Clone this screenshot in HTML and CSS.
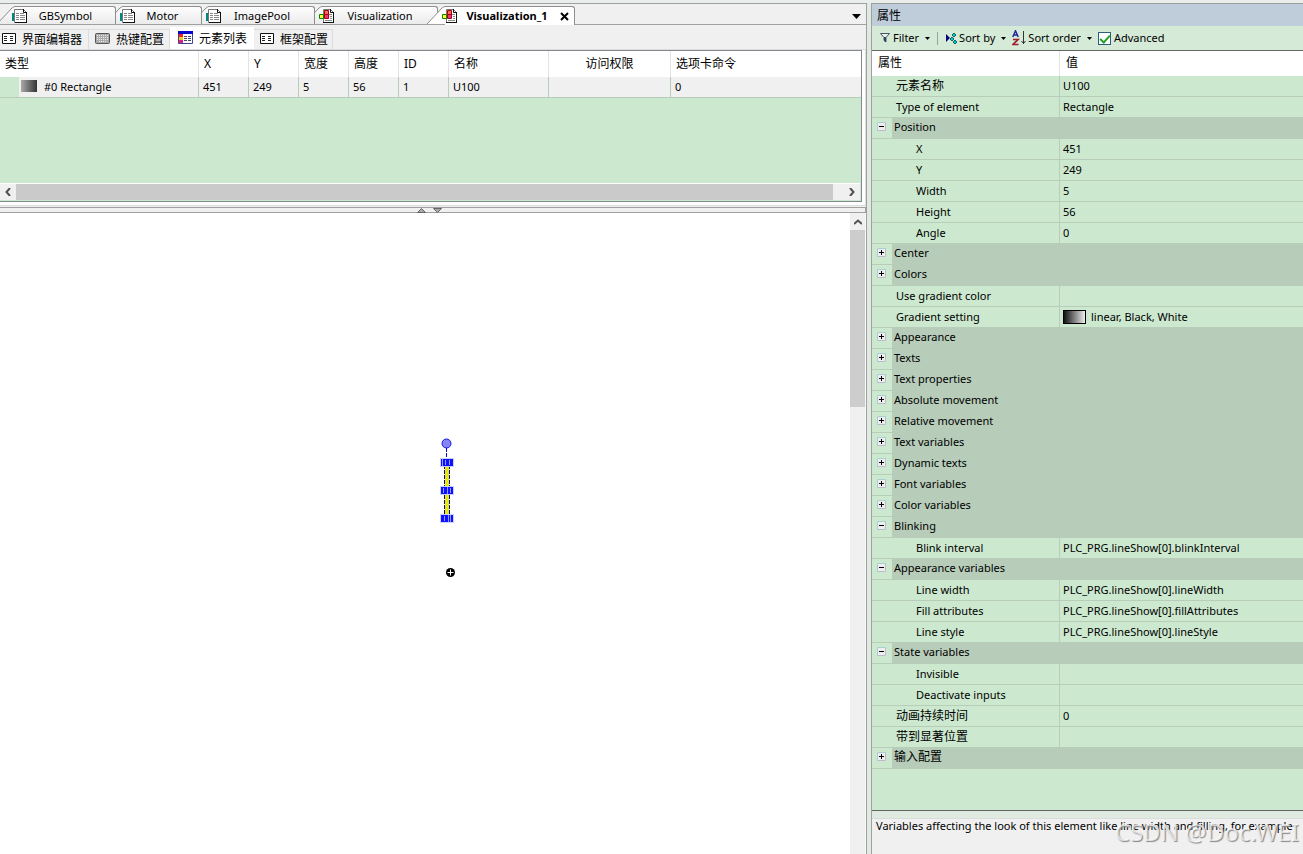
FILE: index.html
```html
<!DOCTYPE html>
<html lang="zh-CN">
<head>
<meta charset="utf-8">
<title>Visualization_1</title>
<link rel="stylesheet" href="styles.css">
</head>
<body>
<svg class="defs" width="0" height="0" aria-hidden="true">
  <defs>
    <linearGradient id="tabfill" x1="0" y1="0" x2="0" y2="1"><stop offset="0" stop-color="#fdfdfd"/><stop offset="1" stop-color="#ebebeb"/></linearGradient>
    <symbol id="slant" viewBox="0 0 18 18"><path d="M0 18L15 2Q17 .5 18 .5V18z" fill="url(#tabfill)"/><path d="M0 18L15 2Q17 .5 18 .5" fill="none" stroke="#8e8e8e"/></symbol>
    <symbol id="slant-on" viewBox="0 0 18 18"><path d="M0 18L15 2Q17 .5 18 .5V18z" fill="#fff"/><path d="M0 18L15 2Q17 .5 18 .5" fill="none" stroke="#8e8e8e"/></symbol>
    <symbol id="doc" viewBox="0 0 16 16"><path d="M0 5h3v8H0z" fill="#008484"/><path d="M2.500 1.500h9l3 3v10h-12z" fill="#fff" stroke="#777"/><path d="M11.500 1v3.500h3.500M14.500 4v11M3 14.500h12" fill="none" stroke="#111"/><path d="M4 5h3M8 5h4M4 7h3M8 7h5M4 9h3M8 9h5M4 11h3M8 11h5" stroke="#888" transform="translate(0 .5)"/></symbol>
    <symbol id="vis" viewBox="0 0 16 16"><path d="M4.500 1.500h7l3 3v10h-10z" fill="#fff" stroke="#777"/><path d="M11.500 1v3.500h3.500M14.500 4v11M4 14.500h11" fill="none" stroke="#111"/><path d="M10 6.500h3M11 8.500h2M11 10.500h2M6 12.500h7" stroke="#888"/><path d="M5.500 2.500h4v4h-4z" fill="#f66" stroke="#a00"/><path d="M.5 6.500h4v4h-4z" fill="#ff3" stroke="#080"/><path d="M5.500 6.500h4v4h-4z" fill="#f0308a" stroke="#a00"/></symbol>
    <symbol id="list" viewBox="0 0 14 11"><path d="M.5.5h13v10H.5z" fill="#fff" stroke="#111"/><path d="M2 3.500h4M8 3.500h4M2 5.500h4M8 5.500h4M2 7.500h4M8 7.500h4" stroke="#222" stroke-dasharray="3 1"/></symbol>
    <symbol id="keys" viewBox="0 0 15 11"><rect x=".5" y=".5" width="14" height="10" rx="1" fill="#aaa" stroke="#555"/><path d="M2 2.500h11M2 4.500h11M2 6.500h11M4 8.500h7" stroke="#eee" stroke-dasharray="1 1"/></symbol>
    <symbol id="elements" viewBox="0 0 15 13"><path d="M.5.5h14v12H.5z" fill="#fff" stroke="#448"/><path d="M0 0h15v3H0z" fill="#0808c8"/><path d="M1 3h4v3H1z" fill="#e22"/><path d="M1 6h4v3H1z" fill="#ec2"/><path d="M1 9h4v3H1z" fill="#e0208a"/><path d="M6 5.500h3M10 5.500h3M6 7.500h3M10 7.500h3M6 9.500h3M10 9.500h3" stroke="#446"/></symbol>
    <symbol id="plus" viewBox="0 0 9 9"><path d="M0 0h9v9H0z" fill="#eee"/><path d="M.5 9V.5H9" fill="none" stroke="#a7cfd4"/><path d="M8.500 1v7.500H1" fill="none" stroke="#bbc"/><path d="M2 4.500h5M4.500 2v5" stroke="#000"/></symbol>
    <symbol id="minus" viewBox="0 0 9 9"><path d="M0 0h9v9H0z" fill="#eee"/><path d="M.5 9V.5H9" fill="none" stroke="#a7cfd4"/><path d="M8.500 1v7.500H1" fill="none" stroke="#bbc"/><path d="M2 4.500h5" stroke="#000"/></symbol>
    <symbol id="caret" viewBox="0 0 5 3"><path d="M0 0h5L2.500 3z" fill="#000"/></symbol>
  </defs>
</svg>
<div class="app">
  <main class="editor">
    <nav class="tabs" aria-label="Documents">
      <button class="tab t1"><svg class="slant"><use href="#slant"/></svg><span class="body"><svg class="i16"><use href="#doc"/></svg><span class="cap">GBSymbol</span></span></button>
      <button class="tab t2"><svg class="slant"><use href="#slant"/></svg><span class="body"><svg class="i16"><use href="#doc"/></svg><span class="cap">Motor</span></span></button>
      <button class="tab t3"><svg class="slant"><use href="#slant"/></svg><span class="body"><svg class="i16"><use href="#doc"/></svg><span class="cap">ImagePool</span></span></button>
      <button class="tab t4"><svg class="slant"><use href="#slant"/></svg><span class="body"><svg class="i16"><use href="#vis"/></svg><span class="cap">Visualization</span></span></button>
      <button class="tab t5 on"><svg class="slant"><use href="#slant-on"/></svg><span class="body"><svg class="i16"><use href="#vis"/></svg><span class="cap">Visualization_1</span><svg class="close" viewBox="0 0 9 9"><path d="M1 1l7 7M8 1L1 8" stroke="#000" stroke-width="2"/></svg></span></button>
      <button class="tablist" aria-label="Tab list"><svg width="9" height="5"><path d="M0 0h9L4.500 5z"/></svg></button>
    </nav>
    <nav class="views" aria-label="Views">
      <button class="view v1"><svg width="14" height="11"><use href="#list"/></svg>界面编辑器</button>
      <button class="view v2"><svg width="15" height="11"><use href="#keys"/></svg>热键配置</button>
      <button class="view v3 sel"><svg width="15" height="13"><use href="#elements"/></svg>元素列表</button>
      <button class="view v4"><svg width="14" height="11"><use href="#list"/></svg>框架配置</button>
    </nav>
    <section class="listwrap">
      <div class="list">
        <table class="elements">
          <colgroup><col class="w200"><col class="w50"><col class="w50"><col class="w50"><col class="w50"><col class="w50"><col class="w100"><col class="w122"><col></colgroup>
          <thead><tr><th>类型</th><th>X</th><th>Y</th><th>宽度</th><th>高度</th><th>ID</th><th>名称</th><th class="mid">访问权限</th><th>选项卡命令</th></tr></thead>
          <tbody><tr><td class="kind"><div class="kindcell"><span class="swatch"></span>#0 Rectangle</div></td><td>451</td><td>249</td><td>5</td><td>56</td><td>1</td><td>U100</td><td></td><td>0</td></tr></tbody>
        </table>
        <div class="hscroll">
          <button aria-label="Scroll left"><svg width="6" height="8"><path d="M5 0L1.500 4 5 8"/></svg></button>
          <div class="hthumb"></div>
          <button aria-label="Scroll right"><svg width="6" height="8"><path d="M1 0l3.500 4L1 8"/></svg></button>
        </div>
      </div>
    </section>
    <div class="splitter">
      <svg width="26" height="5"><path d="M.5 4.500h8L4.500.5z" fill="#aaa" stroke="#666"/><path d="M16.500.5h8l-4 4z" fill="#aaa" stroke="#666"/></svg>
    </div>
    <section class="work">
      <div class="canvas">
        <svg class="shape" width="20" height="140" viewBox="0 0 20 140" role="img" aria-label="Rectangle U100">
          <path d="M9 26h4v56H9z" fill="#eaea00"/>
          <path d="M10.500 10v14M8.500 27v52M13.500 27v52" stroke="#00c" stroke-dasharray="4 1" fill="none"/>
          <circle cx="10.500" cy="5.500" r="4.500" fill="#8585f5" stroke="#1414e6"/>
          <path d="M4 20h14v9H4zM4 48h14v9H4zM4 76h14v9H4z" fill="#c8d2ff"/>
          <path d="M5 21h12v7H5zM5 49h12v7H5zM5 77h12v7H5z" fill="#1010ff"/>
          <path d="M6.500 21v7M9.500 22v5M13.500 22v5M7.500 50v5M11.500 49v7M14.500 50v5M12.500 77v7M14.500 77v7M8.500 78v5" stroke="#8c9cff"/>
          <circle cx="14.500" cy="134.500" r="4.500"/><path d="M11.500 134.500h6M14.500 131.500v6" stroke="#fff"/>
        </svg>
      </div>
      <div class="vscroll">
        <button aria-label="Scroll up"><svg width="8" height="6"><path d="M0 5l4-3.500L8 5"/></svg></button>
        <div class="vthumb"></div>
      </div>
    </section>
  </main>

  <aside class="props">
    <h1>属性</h1>
    <div class="tools">
      <button class="tool filter"><svg width="11" height="10"><path d="M.5.5h9L6 4.500V9L4 7.500v-3z" fill="#eee" stroke="#456"/><path d="M4 4h2v5L4 7.500z" fill="#345"/></svg>Filter<svg class="caret"><use href="#caret"/></svg></button>
      <span class="sep"></span>
      <button class="tool sortby"><svg width="12" height="13"><path d="M1 2v8l4-4z" fill="#00007a"/><path d="M9 1l2 2-2 2-2-2zM7 5l2 2-2 2-2-2zM10 8l2 2-2 2-2-2z" fill="#0cc" stroke="#044" stroke-width=".8"/></svg>Sort by<svg class="caret"><use href="#caret"/></svg></button>
      <button class="tool order"><svg width="14" height="16"><path d="M.8 7L3.500.8 6.200 7M2 5h3" fill="none" stroke="#2525a0" stroke-width="1.500"/><path d="M1 9.500h5l-5 5h5.500" fill="none" stroke="#a02030" stroke-width="1.700"/><path d="M11.500 1v13M9.500 11l2 2.500 2-2.500" fill="none" stroke="#333"/></svg>Sort order<svg class="caret"><use href="#caret"/></svg></button>
      <label class="adv"><input type="checkbox" checked>Advanced</label>
    </div>
    <div class="grid">
      <table class="proptable">
        <colgroup><col class="cname"><col></colgroup>
        <thead><tr><th>属性</th><th>值</th></tr></thead>
        <tbody>
          <tr><td class="zh">元素名称</td><td>U100</td></tr>
          <tr><td>Type of element</td><td>Rectangle</td></tr>
          <tr class="group"><th colspan="2"><div><button aria-label="Collapse"><svg><use href="#minus"/></svg></button><span>Position</span></div></th></tr>
          <tr class="child"><td>X</td><td>451</td></tr>
          <tr class="child"><td>Y</td><td>249</td></tr>
          <tr class="child"><td>Width</td><td>5</td></tr>
          <tr class="child"><td>Height</td><td>56</td></tr>
          <tr class="child"><td>Angle</td><td>0</td></tr>
          <tr class="group"><th colspan="2"><div><button aria-label="Expand"><svg><use href="#plus"/></svg></button><span>Center</span></div></th></tr>
          <tr class="group"><th colspan="2"><div><button aria-label="Expand"><svg><use href="#plus"/></svg></button><span>Colors</span></div></th></tr>
          <tr><td>Use gradient color</td><td></td></tr>
          <tr><td>Gradient setting</td><td><div class="gradval"><span class="grad"></span>linear, Black, White</div></td></tr>
          <tr class="group"><th colspan="2"><div><button aria-label="Expand"><svg><use href="#plus"/></svg></button><span>Appearance</span></div></th></tr>
          <tr class="group"><th colspan="2"><div><button aria-label="Expand"><svg><use href="#plus"/></svg></button><span>Texts</span></div></th></tr>
          <tr class="group"><th colspan="2"><div><button aria-label="Expand"><svg><use href="#plus"/></svg></button><span>Text properties</span></div></th></tr>
          <tr class="group"><th colspan="2"><div><button aria-label="Expand"><svg><use href="#plus"/></svg></button><span>Absolute movement</span></div></th></tr>
          <tr class="group"><th colspan="2"><div><button aria-label="Expand"><svg><use href="#plus"/></svg></button><span>Relative movement</span></div></th></tr>
          <tr class="group"><th colspan="2"><div><button aria-label="Expand"><svg><use href="#plus"/></svg></button><span>Text variables</span></div></th></tr>
          <tr class="group"><th colspan="2"><div><button aria-label="Expand"><svg><use href="#plus"/></svg></button><span>Dynamic texts</span></div></th></tr>
          <tr class="group"><th colspan="2"><div><button aria-label="Expand"><svg><use href="#plus"/></svg></button><span>Font variables</span></div></th></tr>
          <tr class="group"><th colspan="2"><div><button aria-label="Expand"><svg><use href="#plus"/></svg></button><span>Color variables</span></div></th></tr>
          <tr class="group"><th colspan="2"><div><button aria-label="Collapse"><svg><use href="#minus"/></svg></button><span>Blinking</span></div></th></tr>
          <tr class="child"><td>Blink interval</td><td>PLC_PRG.lineShow[0].blinkInterval</td></tr>
          <tr class="group"><th colspan="2"><div><button aria-label="Collapse"><svg><use href="#minus"/></svg></button><span>Appearance variables</span></div></th></tr>
          <tr class="child"><td>Line width</td><td>PLC_PRG.lineShow[0].lineWidth</td></tr>
          <tr class="child"><td>Fill attributes</td><td>PLC_PRG.lineShow[0].fillAttributes</td></tr>
          <tr class="child"><td>Line style</td><td>PLC_PRG.lineShow[0].lineStyle</td></tr>
          <tr class="group"><th colspan="2"><div><button aria-label="Collapse"><svg><use href="#minus"/></svg></button><span>State variables</span></div></th></tr>
          <tr class="child"><td>Invisible</td><td></td></tr>
          <tr class="child"><td>Deactivate inputs</td><td></td></tr>
          <tr><td class="zh">动画持续时间</td><td>0</td></tr>
          <tr><td class="zh">带到显著位置</td><td></td></tr>
          <tr class="group"><th colspan="2"><div><button aria-label="Expand"><svg><use href="#plus"/></svg></button><span class="zh">输入配置</span></div></th></tr>
        </tbody>
      </table>
    </div>
    <p class="hint">Variables affecting the look of this element like line width and filling, for example</p>
    <div class="mark">CSDN @Doc.WEI</div>
  </aside>
</div>
</body>
</html>
```
FILE: styles.css
```css
* { box-sizing: border-box; }
body {
  margin: 0;
  background: #e9eeea;
  color: #000;
  font: 11px/14px "Noto Sans", "Noto Sans CJK SC", sans-serif;
}
button { border: 0; padding: 0; margin: 0; background: none; font: inherit; color: inherit; }
svg { display: block; flex: none; }
.defs { position: absolute; }

.app {
  display: grid;
  grid-template-columns: minmax(0, 1fr) 432px;
  column-gap: 4px;
  min-height: 100vh;
  padding-top: 3px;
  background: linear-gradient(#e9eeea 3px, #dfeae0 3px);
}
.editor {
  display: flex;
  flex-direction: column;
  min-width: 0;
  background: #f0f0f0;
  border-top: 1px solid #a0a0a0;
  border-right: 1px solid #a0a0a0;
}

.tabs {
  display: flex;
  align-items: flex-end;
  height: 21px;
  padding-top: 2px;
  border-bottom: 1px solid #a0a0a0;
}
.tab { display: flex; position: relative; height: 18px; margin-left: -11px; }
.slant { width: 18px; height: 18px; }
.body {
  display: flex;
  flex: 1;
  align-items: center;
  height: 18px;
  border-top: 1px solid #8e8e8e;
  border-right: 1px solid #8e8e8e;
  border-top-right-radius: 3px;
  background: linear-gradient(#fdfdfd, #ebebeb);
}
.i16 { width: 16px; height: 16px; margin-left: -3px; }
.cap { flex: 1; padding: 0 14px 0 2px; text-align: center; }
.t1 { width: 119px; margin-left: -3px; z-index: 4; }
.t2 { width: 97px; z-index: 3; }
.t3 { width: 124px; z-index: 2; }
.t4 { width: 134px; z-index: 1; }
.t5 { width: 148px; z-index: 5; }
.on { height: 19px; margin-bottom: -1px; font-weight: bold; }
.on .body { height: 19px; background: #fff; }
.on .cap { padding: 0 4px 0 0; }
.close { width: 9px; height: 9px; margin-right: 5px; }
.tablist { align-self: center; margin: 2px 5px 0 auto; }

.views { display: flex; align-items: flex-end; height: 25px; border-bottom: 1px solid #dcdcdc; }
.view {
  display: flex;
  align-items: center;
  gap: 6px;
  height: 20px;
  border: 1px solid #dcdcdc;
  border-width: 1px 1px 0 0;
  font-size: 12px;
  line-height: 16px;
}
.view svg { margin-bottom: 3px; }
.v1 { width: 89px; padding-left: 2px; }
.v2 { width: 81px; padding-left: 6px; }
.v3 { width: 84px; padding-left: 8px; }
.v4 { width: 79px; padding-left: 6px; }
.sel { height: 22px; background: #fff; border-color: #fff; }

.listwrap { padding: 0 3px 3px 0; background: #fff; border-right: 1px solid #dcdcdc; border-bottom: 1px solid #dcdcdc; }
.list {
  display: flex;
  flex-direction: column;
  height: 152px;
  border: 1px solid #828790;
  border-left: 0;
  background: #cce8cf;
}
table { width: 100%; table-layout: fixed; border-collapse: separate; border-spacing: 0; }
th { font-weight: normal; text-align: left; }
td, th { white-space: nowrap; overflow: hidden; }
.w200 { width: 199px; }
.w50 { width: 50px; }
.w100 { width: 100px; }
.w122 { width: 122px; }
.elements th { height: 26px; padding: 0 0 0 5px; background: #fff; border-right: 1px solid #e4e4e4; font-size: 12px; line-height: 16px; }
.elements .mid { text-align: center; padding: 0; }
.elements td { height: 21px; padding: 0 0 0 4px; background: #f0f0f0; border-right: 1px solid #b7ccb9; border-bottom: 1px solid #b7ccb9; }
.elements th:last-child, .elements td:last-child { border-right: 0; }
.elements .kind { padding: 0; background: linear-gradient(90deg, #cce8cf 19px, #f0f0f0 19px); }
.kindcell { display: flex; gap: 7px; padding-left: 21px; }
.swatch { width: 16px; height: 12px; background: linear-gradient(90deg, #aaa, #333); }
.hscroll { display: flex; height: 17px; margin: auto 1px 1px 0; background: #f0f0f0; border-top: 1px solid #fff; }
.hscroll button, .vscroll button { display: flex; align-items: center; justify-content: center; }
.hscroll button { width: 16px; }
.hscroll button:last-child { margin-left: auto; }
.hscroll path, .vscroll path { fill: none; stroke: #505050; stroke-width: 2; }
.hthumb { flex: 0 1 817px; background: #cacaca; }
.splitter {
  display: flex;
  justify-content: center;
  height: 6px;
  margin-top: 1px;
  padding-right: 6px;
  border: 1px solid #a0a0a0;
  border-left: 0;
}

.work { display: flex; flex: 1; background: #fff; }
.canvas { position: relative; flex: 1; }
.shape { position: absolute; left: 436px; top: 225px; }
.vscroll { width: 16px; background: #f0f0f0; border-right: 1px solid #f8f8f8; }
.vscroll button { width: 15px; height: 17px; }
.vthumb { height: 177px; background: #cdcdcd; }

.props { display: flex; flex-direction: column; position: relative; min-width: 0; border-left: 1px solid #a0a0a0; }
h1 { margin: 0; height: 23px; padding-left: 5px; border-top: 1px solid #a0a0a0; background: #bfcddb; font-weight: normal; font-size: 12px; line-height: 23px; }
.tools { display: flex; align-items: center; height: 24px; padding-left: 8px; background: #d5ead7; }
.tool { display: flex; align-items: center; gap: 2px; }
.caret { width: 5px; height: 3px; margin-left: 4px; }
.sep { width: 1px; height: 13px; margin: 0 7px; background: #a0a0a0; }
.order { margin-left: 6px; }
.adv { display: flex; align-items: center; gap: 3px; margin-left: 6px; }
.adv input { appearance: none; position: relative; width: 13px; height: 13px; margin: 0; border: 1px solid #285f7e; background: #fff; }
.adv input::after { content: ""; position: absolute; left: 3px; top: 0; width: 4px; height: 8px; border: solid #21a121; border-width: 0 2px 2px 0; transform: rotate(42deg); }

.grid { height: 761px; border: 1px solid #646464; border-width: 1px 0 1px 0; background: #cce8cf; }
.cname { width: 188px; }
.proptable thead th { height: 25px; padding: 0 0 2px 6px; background: #fff; border-right: 1px solid #e4e4e4; font-size: 12px; }
.proptable td { height: 21px; padding: 0 0 0 24px; border-bottom: 1px solid #b7ccb9; border-right: 1px solid #b7ccb9; line-height: 20px; }
.proptable td:last-child { padding-left: 3px; }
.proptable tr > :last-child { border-right: 0; }
.proptable .child td:first-child { padding-left: 44px; }
.zh { font-size: 12px; }
.group th { height: 21px; padding: 0; background: #b7ccb9; }
.group div { display: flex; height: 21px; }
.group button { display: flex; align-items: flex-start; width: 20px; padding: 4px 0 0 5px; background: #cce8cf; border-bottom: 1px solid #b7ccb9; }
.group svg { width: 9px; height: 9px; }
.group span { padding-left: 2px; line-height: 18px; }
.gradval { display: flex; align-items: center; gap: 5px; }
.grad { width: 23px; height: 14px; border: 1px solid #000; background: linear-gradient(90deg, #111, #eee); }

.hint { flex: 1; margin: 7px 0 0; padding: 0 4px; background: #f0f0f0; border-top: 1px solid #dcdcdc; }
.mark { position: absolute; right: 4px; bottom: 8px; color: #ffffffb0; font: 24px/28px "Noto Sans", sans-serif; text-shadow: 1px 1px 1px #888; }
```
